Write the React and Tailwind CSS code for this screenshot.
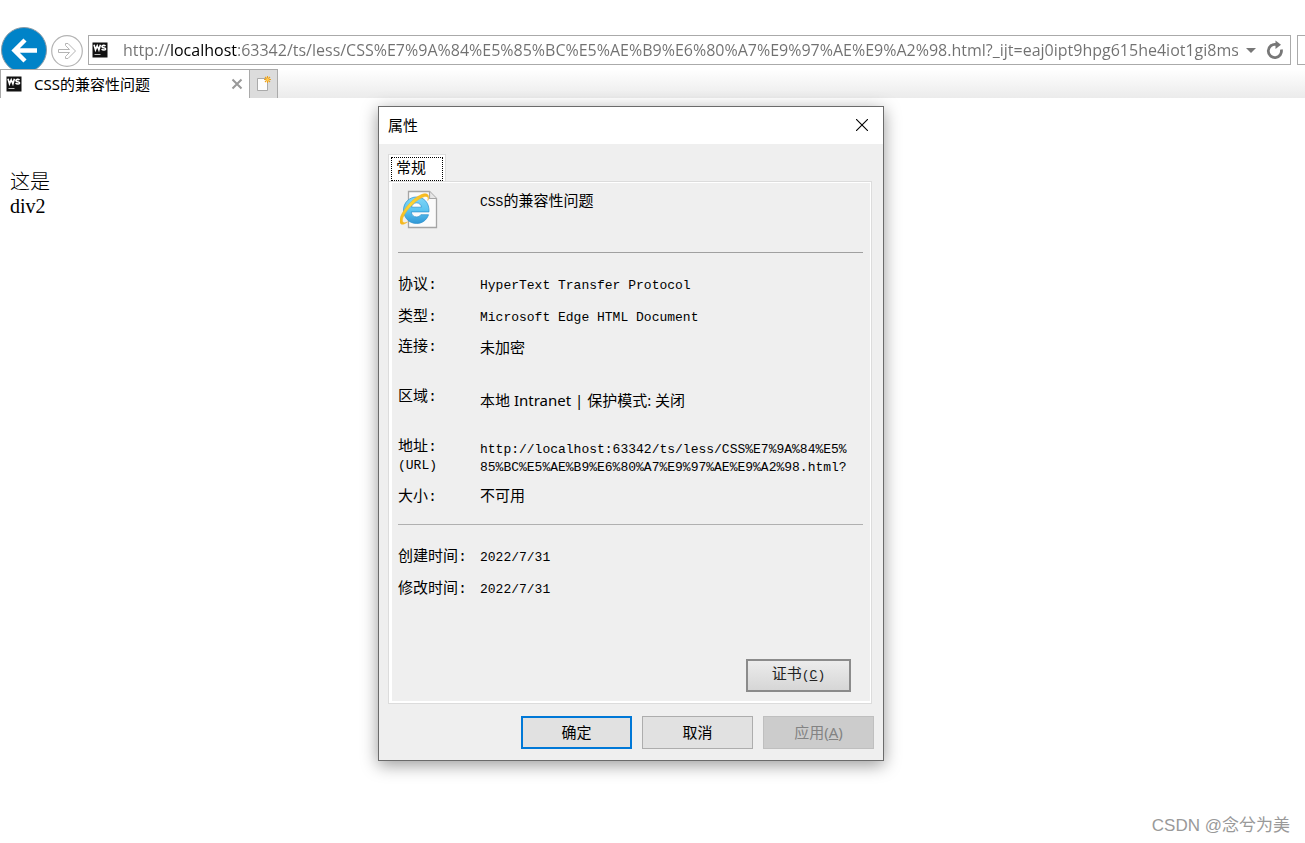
import { useState } from "react";

const pageUrl =
  "http://localhost:63342/ts/less/CSS%E7%9A%84%E5%85%BC%E5%AE%B9%E6%80%A7%E9%97%AE%E9%A2%98.html?_ijt=eaj0ipt9hpg615he4iot1gi8ms";

function WebStormIcon() {
  return (
    <svg viewBox="0 0 16 16" className="h-4 w-4 shrink-0" aria-hidden="true">
      <rect x="0.5" y="0.5" width="15" height="15" fill="#111" />
      <path
        d="M2 2.800l1.500 5L5.200 3.800 6.900 7.800 8.400 2.800M13.500 4c-1.100-1-3.600-.9-3.600.6 0 1.500 3.700.8 3.700 2.300 0 1.400-2.700 1.400-4 .2"
        fill="none"
        stroke="#fff"
        strokeWidth="1.600"
      />
      <path d="M2.500 12.500h6" stroke="#bbb" strokeWidth="1" />
    </svg>
  );
}

function BackIcon() {
  return (
    <svg viewBox="0 0 46 46" className="h-[46px] w-[46px]" aria-hidden="true">
      <circle cx="23" cy="23" r="22.500" fill="#0083c8" stroke="#8a9aa5" strokeWidth="1" />
      <path d="M36 23.500H14M24 13L13.500 23.500 24 34" fill="none" stroke="#fff" strokeWidth="4.400" />
    </svg>
  );
}

function ForwardIcon() {
  return (
    <svg viewBox="0 0 32 32" className="h-8 w-8" aria-hidden="true">
      <circle cx="16" cy="16" r="15.300" fill="#fff" stroke="#b4b4b4" strokeWidth="1.200" />
      <path
        d="M7.500 14.500h11L14.500 10.500V8.500h2.500l7.500 7.500-7.500 7.500h-2.500v-2l4-4h-11z"
        fill="#fff"
        stroke="#b4b4b4"
        strokeWidth="1"
      />
    </svg>
  );
}

function RefreshIcon() {
  return (
    <svg viewBox="0 0 18 20" className="h-5 w-[18px]" aria-hidden="true">
      <path d="M10 4.500A6.600 6.600 0 1 0 15.300 9.500" fill="none" stroke="#777" strokeWidth="2.800" />
      <path d="M9.500 0.500l5.500 4.200L9.500 9z" fill="#777" />
    </svg>
  );
}

function NewTabIcon() {
  return (
    <svg viewBox="0 0 16 16" className="h-4 w-4" aria-hidden="true">
      <path d="M1.500 2.500h10v12h-10z" fill="#fdfdfd" stroke="#999" strokeWidth="0.800" />
      <path d="M11.500 0v7M8 3.500h7M9 1l5 5M14 1L9 6" stroke="#eda21c" strokeWidth="1.100" />
      <circle cx="11.500" cy="3.500" r="1.500" fill="#ffc94d" />
    </svg>
  );
}

function IePageIcon() {
  return (
    <svg viewBox="0 0 38 40" className="h-10 w-[38px]" aria-hidden="true">
      <defs>
        <linearGradient id="ieBlue" x1="0" y1="0" x2="0" y2="1">
          <stop offset="0" stopColor="#7fd6f7" />
          <stop offset="0.500" stopColor="#5cc4f0" />
          <stop offset="1" stopColor="#3097d6" />
        </linearGradient>
        <linearGradient id="ieGold" x1="0" y1="1" x2="1" y2="0">
          <stop offset="0" stopColor="#f5b51c" />
          <stop offset="0.500" stopColor="#fdd835" />
          <stop offset="1" stopColor="#f5b51c" />
        </linearGradient>
      </defs>
      <path d="M8.500 1.500h21l7 7v29h-28z" fill="#fbfbfb" stroke="#a5a5a5" strokeWidth="1.300" />
      <path d="M29.500 1.500v7h7" fill="#e6e6e6" stroke="#a5a5a5" strokeWidth="1.200" />
      <path
        d="M16.500 7C9.500 7 3.500 12.500 3.500 20s5.500 13.500 13 13.500c5.500 0 10.300-3.300 12-8.800h-7.700c-.9 1.500-2.300 2.200-4.300 2.200-3 0-5-2-5.200-5h17.700C29.500 13 24 7 16.500 7zm-5 10.200c.5-2.600 2.400-4.400 5-4.400s4.600 1.800 5 4.400z"
        fill="url(#ieBlue)"
        stroke="#2a8fcd"
        strokeWidth="0.700"
      />
      <path
        d="M27.800 10.500c1-3-.2-4.500-3-4C18 8 6.500 19 3 27.500c-1.500 4-.3 6.500 4.500 4.500-6 4.500-9 2-7.200-4.200C3 19 14.500 6.500 23 4c5-1.300 6.800 1.500 4.800 6.500z"
        fill="url(#ieGold)"
        stroke="#f5b51c"
        strokeWidth="0.500"
      />
    </svg>
  );
}

function Row({ label, note, height, offset, children }) {
  return (
    <div className={`flex ${height}`}>
      <dt className="w-[82px] shrink-0">
        {label}
        {note && <span className="block">{note}</span>}
      </dt>
      <dd className={offset}>{children}</dd>
    </div>
  );
}

const mono =
  "font-['Liberation_Mono','Noto_Sans_CJK_SC',monospace] text-[13px] leading-[18px]";

export default function App() {
  const [url, setUrl] = useState(pageUrl);

  return (
    <div className="relative min-h-screen overflow-hidden bg-white font-['Noto_Sans','Noto_Sans_CJK_SC',sans-serif] text-[15px] text-black">
      <header>
        <div className="flex h-[69px] items-start overflow-hidden pt-[27px]">
          <button type="button" aria-label="后退" className="ml-px shrink-0">
            <BackIcon />
          </button>
          <button type="button" aria-label="前进" className="mt-2 ml-1 shrink-0">
            <ForwardIcon />
          </button>
          <div className="mt-2 ml-[5px] flex h-[30px] min-w-0 flex-1 items-center border border-[#aaa] pr-1.5 pl-[3px]">
            <WebStormIcon />
            <input
              type="text"
              aria-label="地址"
              value={url}
              onChange={(e) => setUrl(e.target.value)}
              className="ml-[15px] h-7 min-w-0 flex-1 bg-[linear-gradient(90deg,#707070_46px,#000_46px,#000_114px,#707070_114px)] bg-clip-text font-['Open_Sans',sans-serif] text-base text-transparent caret-black outline-none"
            />
            <button type="button" aria-label="显示地址列表" className="mr-2.5 ml-2 shrink-0">
              <svg viewBox="0 0 10 5" className="h-[5px] w-2.5" aria-hidden="true">
                <path d="M0 0h10L5 5z" fill="#777" />
              </svg>
            </button>
            <button type="button" aria-label="刷新" className="shrink-0">
              <RefreshIcon />
            </button>
          </div>
          <div className="mt-2 ml-1.5 h-[30px] w-2 shrink-0 border-y border-l border-[#aaa]" />
        </div>

        <div className="flex h-[29px] bg-linear-to-b from-white to-[#ebebeb]">
          <div className="flex w-[249px] items-center border-t border-l border-[#aaa] bg-white pr-1.5 pl-[5px]">
            <WebStormIcon />
            <span className="ml-3 flex-1">CSS的兼容性问题</span>
            <button type="button" aria-label="关闭标签页">
              <svg viewBox="0 0 12 12" className="h-3 w-3" aria-hidden="true">
                <path d="M1.500 1.500l9 9M10.500 1.500l-9 9" stroke="#999" strokeWidth="2" />
              </svg>
            </button>
          </div>
          <button
            type="button"
            aria-label="新建标签页"
            className="flex w-[29px] items-center justify-center border-x border-t border-[#aaa] bg-[#dcdcdc]"
          >
            <NewTabIcon />
          </button>
        </div>
      </header>

      <main className="px-2.5 pt-[72px] font-['Liberation_Serif','Noto_Sans_CJK_SC',serif] text-xl leading-6">
        <p className="font-light">这是</p>
        <p>div2</p>
      </main>

      <section
        role="dialog"
        aria-labelledby="dialog-title"
        className="absolute top-[106px] left-[378px] w-[506px] border border-[#6b6b6b] bg-[#efefef] shadow-[0_4px_16px_rgba(0,0,0,0.4)]"
      >
        <div className="flex h-[37px] items-center justify-between bg-white pr-[15px] pb-px pl-[9px]">
          <h1 id="dialog-title">属性</h1>
          <button type="button" aria-label="关闭">
            <svg viewBox="0 0 12 12" className="h-3 w-3" aria-hidden="true">
              <path d="M0 0l12 12M12 0L0 12" stroke="#000" strokeWidth="1.100" />
            </svg>
          </button>
        </div>

        <div className="px-[9px] pt-2.5 pb-[11px]">
          <div role="tablist" className="flex">
            <button
              type="button"
              role="tab"
              aria-selected="true"
              className="h-[27px] w-[58px] border-x border-t border-[#dcdcdc] bg-white px-0.5 pt-0.5"
            >
              <span className="block h-6 w-[52px] border border-dotted border-black pl-1 text-left leading-[18px]">
                常规
              </span>
            </button>
          </div>

          <div
            role="tabpanel"
            className="w-[484px] border border-[#dcdcdc] bg-white pt-px pr-px pb-0.5 pl-[3px]"
          >
            <div className={`bg-[#efefef] pt-[7px] pr-[7px] pb-[9px] pl-1.5 ${mono}`}>
              <div className="flex h-[63px] border-b border-[#a0a0a0]">
                <div className="w-[82px] pl-0.5">
                  <IePageIcon />
                </div>
                <p className="pt-1 text-[15px]">
                  <span className="text-[13px]">CSS</span>的兼容性问题
                </p>
              </div>

              <dl className="flex h-[272px] flex-col border-b border-[#b0b0b0] pt-6 text-[15px]">
                <Row label="协议:" height="h-8">
                  <span className="text-[13px]">HyperText Transfer Protocol</span>
                </Row>
                <Row label="类型:" height="h-[30px]">
                  <span className="text-[13px]">Microsoft Edge HTML Document</span>
                </Row>
                <Row label="连接:" height="h-[50px]" offset="pt-0.5">
                  未加密
                </Row>
                <Row label="区域:" height="h-[50px]" offset="pt-0.5">
                  <span className="font-['Noto_Sans','Noto_Sans_CJK_SC',sans-serif]">
                    本地 Intranet | 保护模式: 关闭
                  </span>
                </Row>
                <Row
                  label="地址:"
                  note={<span className="text-[13px]">(URL)</span>}
                  height="h-[50px]"
                  offset="pt-0.5 text-[13px]"
                >
                  http://localhost:63342/ts/less/CSS%E7%9A%84%E5%
                  <br />
                  85%BC%E5%AE%B9%E6%80%A7%E9%97%AE%E9%A2%98.html?
                </Row>
                <Row label="大小:" height="h-[18px]">
                  不可用
                </Row>
              </dl>

              <dl className="h-[134px] pt-6 text-[15px]">
                <Row label="创建时间:" height="h-8">
                  <span className="text-[13px]">2022/7/31</span>
                </Row>
                <Row label="修改时间:" height="h-8">
                  <span className="text-[13px]">2022/7/31</span>
                </Row>
              </dl>

              <div className="flex justify-end pr-3">
                <button
                  type="button"
                  className="h-[33px] w-[105px] border-2 border-[#8b8b8b] bg-linear-to-b from-[#ececec] to-[#d6d6d6] text-[15px] text-[#222]"
                >
                  证书
                  <span className="text-[13px]">
                    (<u>C</u>)
                  </span>
                </button>
              </div>
            </div>
          </div>

          <div className="mt-3 flex justify-end gap-2.5">
            <button type="button" className="h-[33px] w-[111px] border-2 border-[#0078d7] bg-[#e1e1e1]">
              确定
            </button>
            <button type="button" className="h-[33px] w-[111px] border border-[#adadad] bg-[#e1e1e1]">
              取消
            </button>
            <button
              type="button"
              disabled
              className="h-[33px] w-[111px] border border-[#bfbfbf] bg-[#ccc] text-[#838383]"
            >
              应用(<u>A</u>)
            </button>
          </div>
        </div>
      </section>

      <p className="absolute right-[15px] bottom-[5px] font-['Liberation_Sans','Noto_Sans_CJK_SC',sans-serif] text-[17px] text-[#999]">
        CSDN @念兮为美
      </p>
    </div>
  );
}
